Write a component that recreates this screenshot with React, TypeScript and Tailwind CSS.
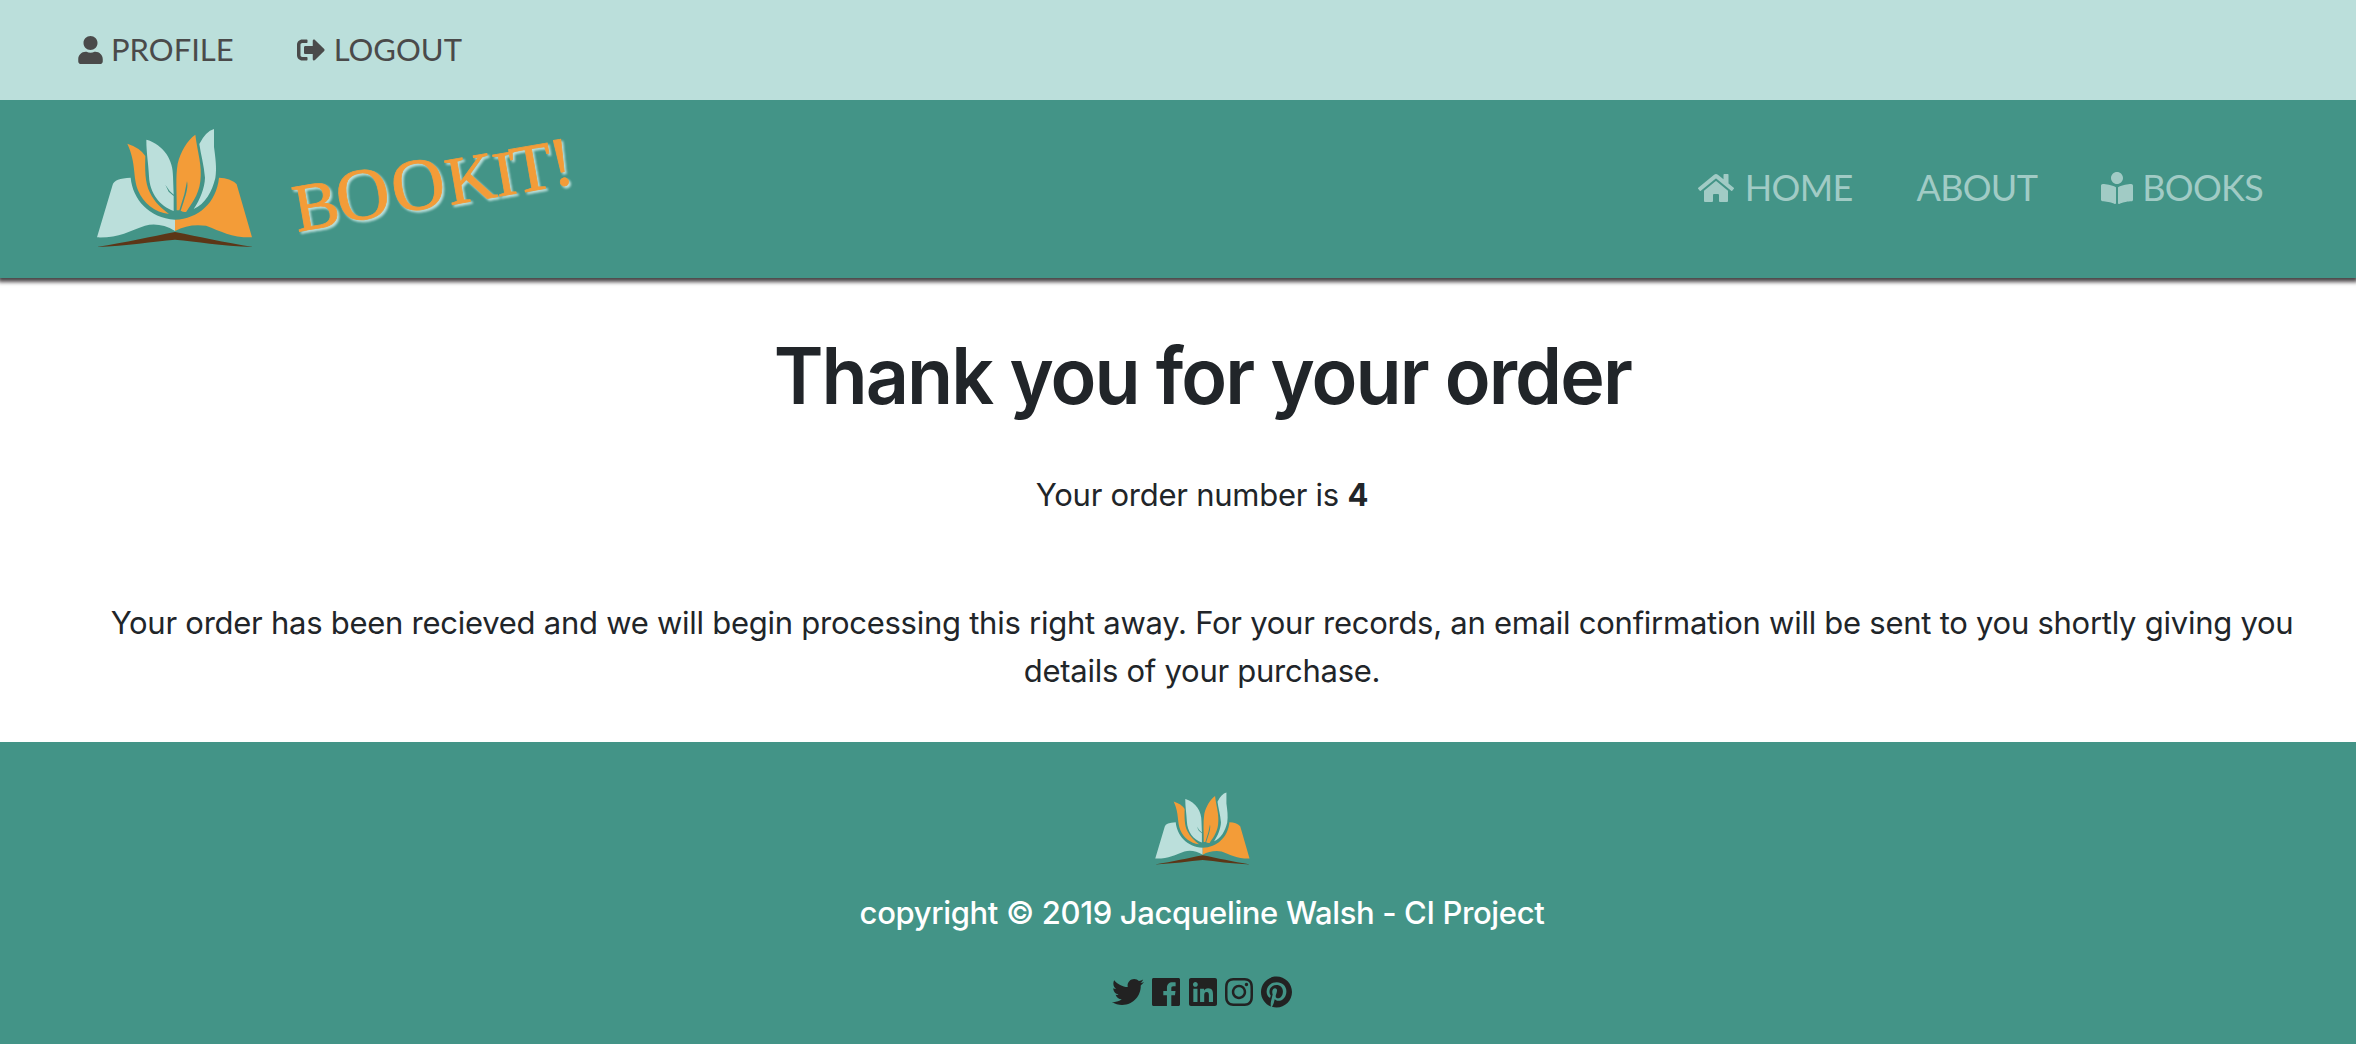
import type { ReactNode } from "react";
import {
  FaBookReader,
  FaHome,
  FaInstagram,
  FaLinkedin,
  FaPinterest,
  FaSignOutAlt,
  FaTwitter,
  FaUser,
} from "react-icons/fa";

function BookLogo({ className }: { className: string }) {
  return (
    <svg viewBox="45 55 480 365" className={className} aria-label="Bookit logo">
      <g fill="#bbdfdb">
        <path d="M51 383 L98 225 Q103 206 152 204 C158 268 206 325 285 330 L285 364 Q240 337 195 348 C147 365 115 385 51 383Z" />
        <path d="M200 90 C252 106 280 152 279 200 L281 255 L269 244 L256 225 L266 246 L281 259 L281 304 C240 290 209 252 207 200 C205 160 199 130 199 92Z" />
        <path d="M402 58 L402 112 C406 142 411 176 406 205 C396 246 376 283 341 298 C360 270 374 235 375 204 C372 166 362 133 358 103 Q377 65 402 58Z" />
      </g>
      <g fill="#f39c38">
        <path d="M285 330 C355 327 409 280 417 204 Q451 204 470 224 L516 383 C455 384 423 365 378 348 Q326 341 285 364Z" />
        <path d="M142 102 Q180 114 196 139 C195 176 194 220 210 249 C224 278 244 295 267 313 C224 308 191 281 175 244 C157 200 170 163 142 102Z" />
        <path d="M346 75 C353 132 367 166 361 215 C356 258 332 286 319 306 Q312 309 302 303 L311 276 C319 251 325 231 321 215 L313 254 L298 302 L290 302 C291 250 286 203 293 162 C301 128 322 91 346 75Z" />
      </g>
      <path fill="#5c3617" d="M50 412 C140 398 212 381 285 367 C358 381 430 398 520 412 C420 408 350 396 285 390 C220 396 140 408 50 412Z" />
    </svg>
  );
}

function Wordmark() {
  return (
    <svg
      viewBox="0 0 320 150"
      className="h-[150px] w-[320px] overflow-visible [filter:drop-shadow(2px_2px_1px_#bbdfdb)]"
    >
      <text
        transform="translate(26 118) rotate(-9.9)"
        textAnchor="middle"
        fill="#f39c38"
        stroke="#f39c38"
        strokeWidth="0.8"
        fontSize="70"
        className="[font-family:'Liberation_Serif',serif]"
      >
        <tspan x="24" y="0" fontSize="68">B</tspan>
        <tspan x="72" y="-1" fontSize="74">O</tspan>
        <tspan x="128" y="-1" fontSize="74">O</tspan>
        <tspan x="181" y="0" fontSize="68">K</tspan>
        <tspan x="215" y="0" fontSize="64">I</tspan>
        <tspan x="243" y="0" fontSize="68">T</tspan>
        <tspan x="273" y="0" fontSize="70">!</tspan>
      </text>
    </svg>
  );
}

function FacebookIcon({ className }: { className: string }) {
  return (
    <svg viewBox="0 0 448 512" fill="currentColor" className={className}>
      <path d="M448 56.7v398.5c0 13.7-11.1 24.7-24.7 24.7H309.1V306.5h58.2l8.7-67.6h-67v-43.2c0-19.6 5.4-32.9 33.5-32.9h35.8v-60.5c-6.2-.8-27.4-2.7-52.2-2.7-51.6 0-87 31.5-87 89.4v49.9h-58.4v67.6h58.4V480H24.7C11.1 480 0 468.9 0 455.3V56.7C0 43.1 11.1 32 24.7 32h398.5c13.7 0 24.8 11.1 24.8 24.7z" />
    </svg>
  );
}

function NavLink({ icon, children }: { icon?: ReactNode; children: ReactNode }) {
  return (
    <a href="#" className="flex items-center gap-[8px]">
      {icon}
      <span className="-mt-[3px]">{children}</span>
    </a>
  );
}

export default function App() {
  return (
    <div className="flex h-[1044px] w-[2356px] flex-col overflow-hidden bg-white text-[31px] leading-[48px] tracking-[-0.26px] text-[#212529] [font-family:Inter,sans-serif]">
      <nav className="z-20 flex h-[100px] shrink-0 items-center gap-[63px] bg-[#bbdfdb] pl-[78px] text-[31px] tracking-[0px] text-[#4a4a4a] [font-family:Lato,sans-serif]">
        <NavLink icon={<FaUser className="h-7 w-[25px]" />}>PROFILE</NavLink>
        <NavLink icon={<FaSignOutAlt className="mr-px size-7" />}>LOGOUT</NavLink>
      </nav>

      <header className="z-10 flex h-[178px] shrink-0 items-center bg-[#439487] pr-[93px] pl-[95px] shadow-[0_2px_4px_2px_#4a4648]">
        <BookLogo className="h-[121.7px] w-[160px]" />
        <div className="ml-[15px] flex">
          <Wordmark />
        </div>
        <nav className="ml-auto flex items-center gap-[64px] pb-0.5 text-[36px] tracking-[-0.7px] text-[#a1cbc5] [font-family:Lato,sans-serif]">
          <NavLink icon={<FaHome className="mr-[3px] h-8 w-9" />}>HOME</NavLink>
          <NavLink>ABOUT</NavLink>
          <NavLink icon={<FaBookReader className="mr-px size-8" />}>BOOKS</NavLink>
        </nav>
      </header>

      <main className="flex h-[464px] shrink-0 flex-col items-center pt-[50px] pl-[48px] text-center">
        <h1 className="origin-center scale-x-[0.967] text-[78px] leading-[96px] font-[570] tracking-[-2px]">
          Thank you for your order
        </h1>
        <p className="mt-[47px]">
          Your order number is <strong>4</strong>
        </p>
        <p className="mt-20 w-[2212px]">
          Your order has been recieved and we will begin processing this right away. For your
          records, an email confirmation will be sent to you shortly giving you details of your
          purchase.
        </p>
      </main>

      <footer className="flex flex-1 flex-col items-center bg-[#439487] pt-[50px] pl-[48px]">
        <BookLogo className="ml-[2px] h-[74px] w-[97.4px]" />
        <p className="mt-[23px] font-[450] tracking-[-0.36px] text-white">
          copyright © 2019 Jacqueline Walsh - CI Project
        </p>
        <div className="mt-[39px] flex items-center gap-[8.4px] text-[#222222]">
          <FaTwitter className="size-8" />
          <FacebookIcon className="h-8 w-7" />
          <FaLinkedin className="h-8 w-7" />
          <FaInstagram className="h-8 w-7" />
          <FaPinterest className="h-8 w-[31px]" />
        </div>
      </footer>
    </div>
  );
}
